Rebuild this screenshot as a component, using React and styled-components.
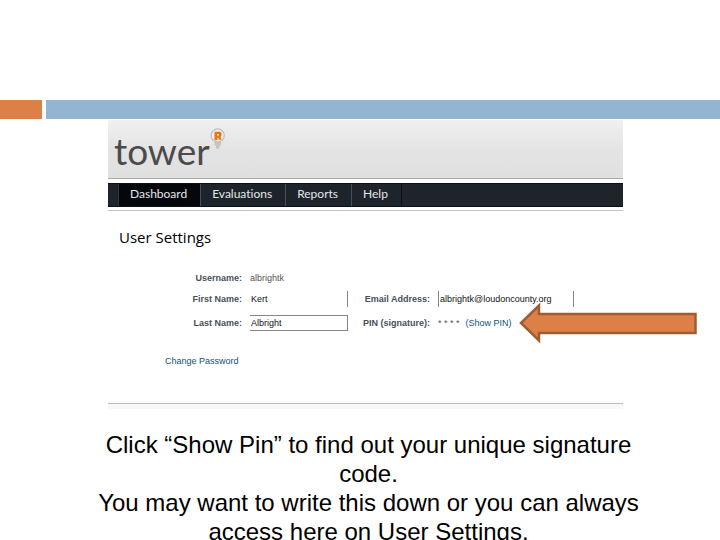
import { useState } from "react";
import styled, { createGlobalStyle } from "styled-components";

const GlobalStyle = createGlobalStyle`
  * {
    box-sizing: border-box;
  }

  body {
    margin: 0;
    background: #fff;
    font-family: "Liberation Sans", Arial, sans-serif;
    overflow-x: hidden;
    scrollbar-width: none;
  }
`;

const Slide = styled.div`
  padding-top: 100px;
`;

const Ribbon = styled.div`
  display: grid;
  grid-template-columns: 42px 1fr;
  gap: 4px;
  height: 19px;
`;

const RibbonBar = styled.div`
  background: ${({ $color }) => $color};
`;

const Content = styled.main`
  padding: 1px 97px 0 108px;
`;

const Header = styled.header`
  height: 59px;
  padding: 6px;
  display: flex;
  align-items: flex-start;
  background: linear-gradient(#f0f0f0, #e3e3e3 55%, #e0e0e0);
  border-bottom: 1px solid #a9a9a9;
`;

const LogoText = styled.span`
  font-family: Lato, sans-serif;
  font-size: 37px;
  line-height: 50px;
  color: #4b4b4b;
`;

const Nav = styled.nav`
  display: flex;
  height: 24px;
  margin-top: 4px;
  padding-left: 10px;
  background: #1e242c;
  border-top: 1px solid #0c1015;
  border-bottom: 1px solid #0c1015;
`;

const NavLink = styled.a`
  padding: 0 13px 0 11px;
  border-left: 1px solid ${({ $active }) => ($active ? "#30363d" : "#4a5057")};
  background: ${({ $active }) => ($active ? "#04070b" : "transparent")};
  color: #e4e6e8;
  font-family: Lato, sans-serif;
  font-size: 12px;
  font-variant-ligatures: none;
  line-height: 20px;
  text-decoration: none;

  &:last-child {
    border-right: 1px solid #0c1015;
  }
`;

const Settings = styled.section`
  margin-top: 3px;
  border-top: 1px solid #c4c4c4;
  border-bottom: 1px solid #bdbdbd;
`;

const Title = styled.h1`
  margin: 0;
  padding: 16px 11px 0;
  font-family: "Open Sans", sans-serif;
  font-size: 15px;
  font-weight: 400;
  line-height: 20px;
  color: #000;
`;

const Form = styled.form`
  display: grid;
  grid-template-columns: 134px 98px 74px 1fr;
  grid-template-rows: 18px 24px 24px;
  column-gap: 8px;
  align-items: center;
  padding-top: 22px;
  font-size: 9px;
  color: #555;
`;

const Label = styled.label`
  grid-column: ${({ $col }) => $col};
  justify-self: end;
  font-weight: 700;
  white-space: nowrap;
  color: #46505a;
`;

const Input = styled.input`
  width: ${({ $width }) => $width};
  height: 16px;
  padding: 0 1px;
  border: 1px solid #84848a;
  border-width: ${({ $edges }) => $edges};
  border-radius: 0;
  background: #fff;
  color: #111;
  font: inherit;
  outline: none;
`;

const Pin = styled.div`
  position: relative;
  justify-self: start;
  display: flex;
  gap: 6px;
  white-space: pre;
`;

const PinButton = styled.button`
  padding: 0;
  border: 0;
  background: none;
  color: #14527c;
  font: inherit;
  cursor: pointer;
`;

const Arrow = styled.svg`
  position: absolute;
  left: calc(100% + 7px);
  top: 50%;
  width: 178px;
  height: 42px;
  margin-top: -21px;
`;

const PasswordLink = styled.a`
  display: inline-block;
  margin: 20px 0 36px 57px;
  font-size: 9px;
  line-height: 12px;
  color: #14527c;
  text-decoration: none;
`;

const Footer = styled.div`
  height: 5px;
  background: #f8f8f8;
`;

const Caption = styled.div`
  margin: 21px -24px 0 -18px;
  font-size: 24px;
  line-height: 29px;
  text-align: center;
  color: #000;
`;

const Line = styled.p`
  margin: 0;
`;

const Bulb = styled.svg`
  width: 16px;
  height: 22px;
  margin-top: 2px;
`;

const BulbIcon = () => (
  <Bulb viewBox="0 0 16 22" aria-hidden="true">
    <path d="M4.500 13h6.500v4l-1.500 1v2.500H6V18l-1.500-1z" fill="#c4c4c4" />
    <circle
      cx="7.700"
      cy="7.500"
      r="6.600"
      fill="#f4efeb"
      stroke="#c9b8ac"
      strokeWidth="1.200"
    />
    <path
      fillRule="evenodd"
      d="M4.500 3.800h5.500l1.500 1v3l-1 1 1 2.900H9L8.300 9.800H7.300v2.400H4.500zM7 6v1.500h2V6z"
      fill="#ea7418"
    />
  </Bulb>
);

const navItems = ["Dashboard", "Evaluations", "Reports", "Help"];

const App = () => {
  const [user, setUser] = useState({
    firstName: "Kert",
    lastName: "Albright",
    email: "albrightk@loudoncounty.org",
  });

  const onChange = (e) => setUser({ ...user, [e.target.name]: e.target.value });

  return (
    <Slide>
      <GlobalStyle />
      <Ribbon>
        <RibbonBar $color="#dc8047" />
        <RibbonBar $color="#94b5d2" />
      </Ribbon>
      <Content>
        <Header>
          <LogoText>tower</LogoText>
          <BulbIcon />
        </Header>
        <Nav>
          {navItems.map((item, i) => (
            <NavLink key={item} href="#" $active={i === 0}>
              {item}
            </NavLink>
          ))}
        </Nav>
        <Settings>
          <Title>User Settings</Title>
          <Form>
            <Label as="span" $col={1}>
              Username:
            </Label>
            <span>albrightk</span>

            <Label $col={1} htmlFor="firstName">
              First Name:
            </Label>
            <Input
              id="firstName"
              name="firstName"
              value={user.firstName}
              onChange={onChange}
              $width="98px"
              $edges="0 1px 0 0"
            />
            <Label $col={3} htmlFor="email">
              Email Address:
            </Label>
            <Input
              id="email"
              name="email"
              value={user.email}
              onChange={onChange}
              $width="136px"
              $edges="0 1px"
            />

            <Label $col={1} htmlFor="lastName">
              Last Name:
            </Label>
            <Input
              id="lastName"
              name="lastName"
              value={user.lastName}
              onChange={onChange}
              $width="98px"
              $edges="1px 1px 1px 0"
            />
            <Label as="span" $col={3}>
              PIN (signature):
            </Label>
            <Pin>
              <span>* * * *</span>
              <PinButton type="button">(Show PIN)</PinButton>
              <Arrow viewBox="0 0 178 42" aria-hidden="true">
                <path
                  d="M2 21L20 3.500V12H176.500V31H20V38.500z"
                  fill="#dc8047"
                  stroke="#9c5d35"
                  strokeWidth="2.500"
                />
              </Arrow>
            </Pin>
          </Form>
          <PasswordLink href="#">Change Password</PasswordLink>
        </Settings>
        <Footer />
        <Caption>
          <Line>Click “Show Pin” to find out your unique signature code.</Line>
          <Line>
            You may want to write this down or you can always access here on
            User Settings.
          </Line>
        </Caption>
      </Content>
    </Slide>
  );
};

export default App;
